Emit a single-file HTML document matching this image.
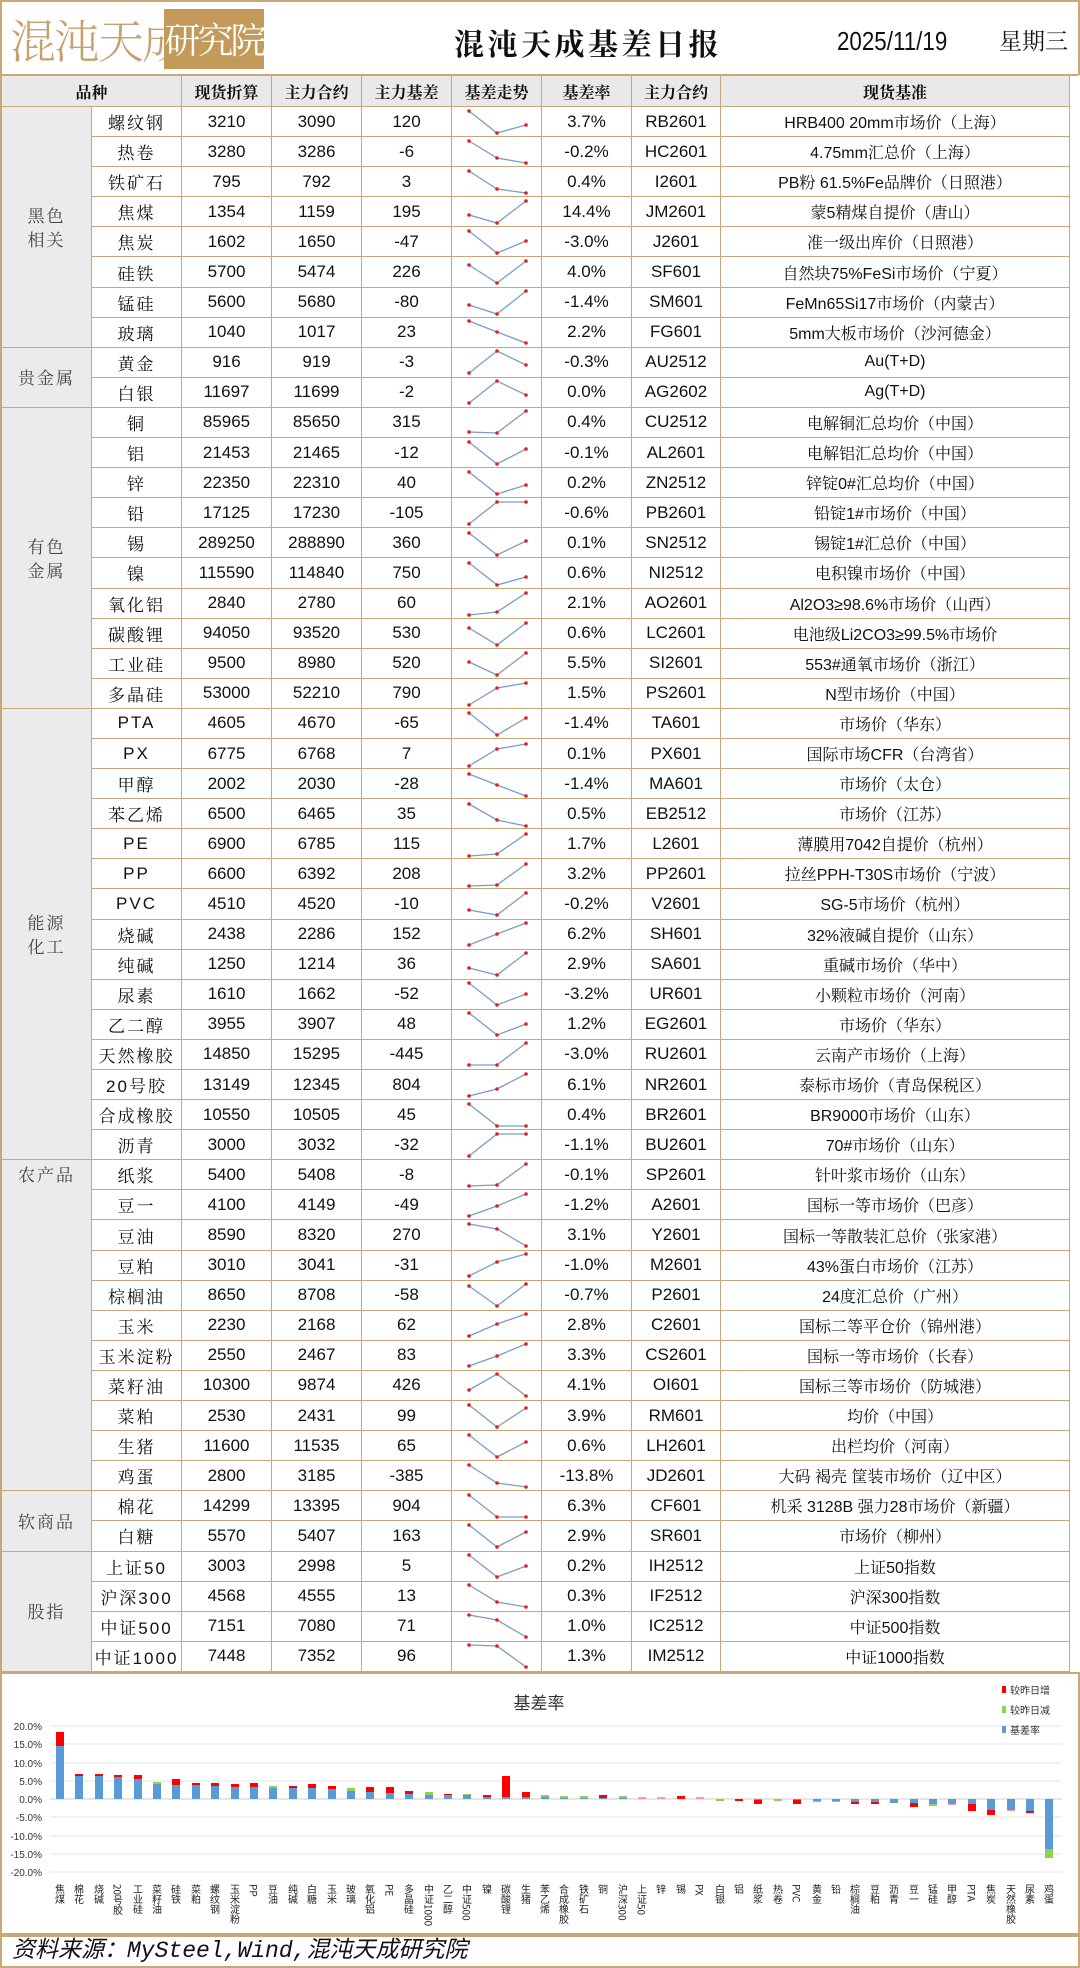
<!DOCTYPE html>
<html><head><meta charset="utf-8">
<style>
*{box-sizing:border-box;margin:0;padding:0}
body{width:1080px;height:1968px;background:#fff;position:relative;overflow:hidden;font-family:"Liberation Sans","Noto Serif CJK SC",serif;color:#111}
.hdr{position:absolute;left:0;top:0;width:1080px;height:75px;border:2px solid #c8a878;border-bottom:none}
.logo1{position:absolute;left:8px;top:4px;font-family:"Noto Serif CJK SC",serif;font-size:46px;color:#c8a070;font-weight:300;letter-spacing:-2px;line-height:66px}
.logo2{position:absolute;left:162px;top:7px;width:100px;height:60px;background:#c49a5a;color:#fff;font-family:"Noto Serif CJK SC",serif;font-size:36px;line-height:60px;text-align:center;letter-spacing:-3px}
.title{position:absolute;left:452px;top:18px;font-family:"Noto Serif CJK SC",serif;font-weight:bold;font-size:30px;letter-spacing:3.5px;line-height:44px}
.date{position:absolute;left:835px;top:22px;font-size:26px;line-height:34px;transform:scaleX(.86);transform-origin:left;font-family:"Liberation Sans",sans-serif}
.week{position:absolute;left:997px;top:21px;font-size:23px;line-height:34px;font-family:"Noto Serif CJK SC",serif}
.grid{position:absolute;left:0;top:74px;width:1078px;display:grid;grid-template-columns:90px 90px 90px 90px 90px 90px 90px 89px 349px;grid-template-rows:31px repeat(52,30.1px);border-left:2px solid #c8a878;border-top:2px solid #c8a878}
.grid>div{border-right:1.5px solid #c8a878;border-bottom:1.5px solid #c8a878;display:flex;align-items:center;justify-content:center;font-size:17px;font-family:"Liberation Sans","Noto Serif CJK SC",sans-serif;white-space:nowrap;overflow:hidden}
.grid>div.h{background:#e9e9e9;font-family:"Noto Serif CJK SC",serif;font-weight:bold;font-size:16px}
.grid>div.h2{grid-column:span 2}
.grid>div.g{background:#ebebeb;font-family:"Noto Serif CJK SC",serif;font-size:17px;color:#444;text-align:center;line-height:24px;letter-spacing:2px}
.grid>div.n{font-family:"Liberation Sans","Noto Serif CJK SC",serif;letter-spacing:2px}
.grid>div.b{font-size:16px}
.grid>div.s{padding:0}
.s polyline{fill:none;stroke:#7a9cc6;stroke-width:1.3}
.s circle{r:1.8px;fill:#e02020}
.chart{position:absolute;left:0;top:1672px;width:1080px;height:263px;border:2px solid #c8a878}
.foot{position:absolute;left:0;top:1935px;width:1080px;height:33px;border:2px solid #c8a878;font-style:italic;font-size:23px;padding-left:10px;line-height:29px;font-family:"Liberation Mono","Noto Sans CJK SC",monospace}
</style></head><body>
<div class="hdr">
<div class="logo1">混沌天成</div>
<div class="logo2">研究院</div>
<div class="title">混沌天成基差日报</div>
<div class="date">2025/11/19</div>
<div class="week">星期三</div>
</div>
<div class="grid">
<div class="h h2">品种</div><div class="h">现货折算</div><div class="h">主力合约</div><div class="h">主力基差</div><div class="h">基差走势</div><div class="h">基差率</div><div class="h">主力合约</div><div class="h">现货基准</div>

<div class="g" style="grid-row:span 8">黑色<br>相关</div>
<div class="n">螺纹钢</div><div>3210</div><div>3090</div><div>120</div><div class="s"><svg width="90" height="30"><polyline points="17,4 45,26 74,18"/><circle cx="17" cy="4"/><circle cx="45" cy="26"/><circle cx="74" cy="18"/></svg></div><div>3.7%</div><div>RB2601</div><div class="b">HRB400 20mm市场价（上海）</div>
<div class="n">热卷</div><div>3280</div><div>3286</div><div>-6</div><div class="s"><svg width="90" height="30"><polyline points="17,4 45,21 74,26"/><circle cx="17" cy="4"/><circle cx="45" cy="21"/><circle cx="74" cy="26"/></svg></div><div>-0.2%</div><div>HC2601</div><div class="b">4.75mm汇总价（上海）</div>
<div class="n">铁矿石</div><div>795</div><div>792</div><div>3</div><div class="s"><svg width="90" height="30"><polyline points="17,4 45,22 74,26"/><circle cx="17" cy="4"/><circle cx="45" cy="22"/><circle cx="74" cy="26"/></svg></div><div>0.4%</div><div>I2601</div><div class="b">PB粉 61.5%Fe品牌价（日照港）</div>
<div class="n">焦煤</div><div>1354</div><div>1159</div><div>195</div><div class="s"><svg width="90" height="30"><polyline points="17,18 45,26 74,4"/><circle cx="17" cy="18"/><circle cx="45" cy="26"/><circle cx="74" cy="4"/></svg></div><div>14.4%</div><div>JM2601</div><div class="b">蒙5精煤自提价（唐山）</div>
<div class="n">焦炭</div><div>1602</div><div>1650</div><div>-47</div><div class="s"><svg width="90" height="30"><polyline points="17,4 45,26 74,14"/><circle cx="17" cy="4"/><circle cx="45" cy="26"/><circle cx="74" cy="14"/></svg></div><div>-3.0%</div><div>J2601</div><div class="b">准一级出库价（日照港）</div>
<div class="n">硅铁</div><div>5700</div><div>5474</div><div>226</div><div class="s"><svg width="90" height="30"><polyline points="17,8 45,26 74,4"/><circle cx="17" cy="8"/><circle cx="45" cy="26"/><circle cx="74" cy="4"/></svg></div><div>4.0%</div><div>SF601</div><div class="b">自然块75%FeSi市场价（宁夏）</div>
<div class="n">锰硅</div><div>5600</div><div>5680</div><div>-80</div><div class="s"><svg width="90" height="30"><polyline points="17,18 45,27 74,4"/><circle cx="17" cy="18"/><circle cx="45" cy="27"/><circle cx="74" cy="4"/></svg></div><div>-1.4%</div><div>SM601</div><div class="b">FeMn65Si17市场价（内蒙古）</div>
<div class="n">玻璃</div><div>1040</div><div>1017</div><div>23</div><div class="s"><svg width="90" height="30"><polyline points="17,4 45,15 74,26"/><circle cx="17" cy="4"/><circle cx="45" cy="15"/><circle cx="74" cy="26"/></svg></div><div>2.2%</div><div>FG601</div><div class="b">5mm大板市场价（沙河德金）</div>

<div class="g" style="grid-row:span 2">贵金属</div>
<div class="n">黄金</div><div>916</div><div>919</div><div>-3</div><div class="s"><svg width="90" height="30"><polyline points="17,26 45,4 74,18"/><circle cx="17" cy="26"/><circle cx="45" cy="4"/><circle cx="74" cy="18"/></svg></div><div>-0.3%</div><div>AU2512</div><div class="b">Au(T+D)</div>
<div class="n">白银</div><div>11697</div><div>11699</div><div>-2</div><div class="s"><svg width="90" height="30"><polyline points="17,26 45,4 74,18"/><circle cx="17" cy="26"/><circle cx="45" cy="4"/><circle cx="74" cy="18"/></svg></div><div>0.0%</div><div>AG2602</div><div class="b">Ag(T+D)</div>

<div class="g" style="grid-row:span 10">有色<br>金属</div>
<div class="n">铜</div><div>85965</div><div>85650</div><div>315</div><div class="s"><svg width="90" height="30"><polyline points="17,25 45,26 74,4"/><circle cx="17" cy="25"/><circle cx="45" cy="26"/><circle cx="74" cy="4"/></svg></div><div>0.4%</div><div>CU2512</div><div class="b">电解铜汇总均价（中国）</div>
<div class="n">铝</div><div>21453</div><div>21465</div><div>-12</div><div class="s"><svg width="90" height="30"><polyline points="17,4 45,26 74,11"/><circle cx="17" cy="4"/><circle cx="45" cy="26"/><circle cx="74" cy="11"/></svg></div><div>-0.1%</div><div>AL2601</div><div class="b">电解铝汇总均价（中国）</div>
<div class="n">锌</div><div>22350</div><div>22310</div><div>40</div><div class="s"><svg width="90" height="30"><polyline points="17,4 45,26 74,17"/><circle cx="17" cy="4"/><circle cx="45" cy="26"/><circle cx="74" cy="17"/></svg></div><div>0.2%</div><div>ZN2512</div><div class="b">锌锭0#汇总均价（中国）</div>
<div class="n">铅</div><div>17125</div><div>17230</div><div>-105</div><div class="s"><svg width="90" height="30"><polyline points="17,26 45,4 74,4"/><circle cx="17" cy="26"/><circle cx="45" cy="4"/><circle cx="74" cy="4"/></svg></div><div>-0.6%</div><div>PB2601</div><div class="b">铅锭1#市场价（中国）</div>
<div class="n">锡</div><div>289250</div><div>288890</div><div>360</div><div class="s"><svg width="90" height="30"><polyline points="17,5 45,27 74,13"/><circle cx="17" cy="5"/><circle cx="45" cy="27"/><circle cx="74" cy="13"/></svg></div><div>0.1%</div><div>SN2512</div><div class="b">锡锭1#汇总价（中国）</div>
<div class="n">镍</div><div>115590</div><div>114840</div><div>750</div><div class="s"><svg width="90" height="30"><polyline points="17,5 45,27 74,19"/><circle cx="17" cy="5"/><circle cx="45" cy="27"/><circle cx="74" cy="19"/></svg></div><div>0.6%</div><div>NI2512</div><div class="b">电积镍市场价（中国）</div>
<div class="n">氧化铝</div><div>2840</div><div>2780</div><div>60</div><div class="s"><svg width="90" height="30"><polyline points="17,27 45,24 74,5"/><circle cx="17" cy="27"/><circle cx="45" cy="24"/><circle cx="74" cy="5"/></svg></div><div>2.1%</div><div>AO2601</div><div class="b">Al2O3≥98.6%市场价（山西）</div>
<div class="n">碳酸锂</div><div>94050</div><div>93520</div><div>530</div><div class="s"><svg width="90" height="30"><polyline points="17,10 45,27 74,5"/><circle cx="17" cy="10"/><circle cx="45" cy="27"/><circle cx="74" cy="5"/></svg></div><div>0.6%</div><div>LC2601</div><div class="b">电池级Li2CO3≥99.5%市场价</div>
<div class="n">工业硅</div><div>9500</div><div>8980</div><div>520</div><div class="s"><svg width="90" height="30"><polyline points="17,14 45,27 74,5"/><circle cx="17" cy="14"/><circle cx="45" cy="27"/><circle cx="74" cy="5"/></svg></div><div>5.5%</div><div>SI2601</div><div class="b">553#通氧市场价（浙江）</div>
<div class="n">多晶硅</div><div>53000</div><div>52210</div><div>790</div><div class="s"><svg width="90" height="30"><polyline points="17,27 45,10 74,5"/><circle cx="17" cy="27"/><circle cx="45" cy="10"/><circle cx="74" cy="5"/></svg></div><div>1.5%</div><div>PS2601</div><div class="b">N型市场价（中国）</div>

<div class="g" style="grid-row:span 15">能源<br>化工</div>
<div class="n">PTA</div><div>4605</div><div>4670</div><div>-65</div><div class="s"><svg width="90" height="30"><polyline points="17,5 45,27 74,10"/><circle cx="17" cy="5"/><circle cx="45" cy="27"/><circle cx="74" cy="10"/></svg></div><div>-1.4%</div><div>TA601</div><div class="b">市场价（华东）</div>
<div class="n">PX</div><div>6775</div><div>6768</div><div>7</div><div class="s"><svg width="90" height="30"><polyline points="17,27 45,10 74,5"/><circle cx="17" cy="27"/><circle cx="45" cy="10"/><circle cx="74" cy="5"/></svg></div><div>0.1%</div><div>PX601</div><div class="b">国际市场CFR（台湾省）</div>
<div class="n">甲醇</div><div>2002</div><div>2030</div><div>-28</div><div class="s"><svg width="90" height="30"><polyline points="17,5 45,16 74,27"/><circle cx="17" cy="5"/><circle cx="45" cy="16"/><circle cx="74" cy="27"/></svg></div><div>-1.4%</div><div>MA601</div><div class="b">市场价（太仓）</div>
<div class="n">苯乙烯</div><div>6500</div><div>6465</div><div>35</div><div class="s"><svg width="90" height="30"><polyline points="17,5 45,21 74,27"/><circle cx="17" cy="5"/><circle cx="45" cy="21"/><circle cx="74" cy="27"/></svg></div><div>0.5%</div><div>EB2512</div><div class="b">市场价（江苏）</div>
<div class="n">PE</div><div>6900</div><div>6785</div><div>115</div><div class="s"><svg width="90" height="30"><polyline points="17,27 45,25 74,5"/><circle cx="17" cy="27"/><circle cx="45" cy="25"/><circle cx="74" cy="5"/></svg></div><div>1.7%</div><div>L2601</div><div class="b">薄膜用7042自提价（杭州）</div>
<div class="n">PP</div><div>6600</div><div>6392</div><div>208</div><div class="s"><svg width="90" height="30"><polyline points="17,27 45,26 74,5"/><circle cx="17" cy="27"/><circle cx="45" cy="26"/><circle cx="74" cy="5"/></svg></div><div>3.2%</div><div>PP2601</div><div class="b">拉丝PPH-T30S市场价（宁波）</div>
<div class="n">PVC</div><div>4510</div><div>4520</div><div>-10</div><div class="s"><svg width="90" height="30"><polyline points="17,21 45,26 74,4"/><circle cx="17" cy="21"/><circle cx="45" cy="26"/><circle cx="74" cy="4"/></svg></div><div>-0.2%</div><div>V2601</div><div class="b">SG-5市场价（杭州）</div>
<div class="n">烧碱</div><div>2438</div><div>2286</div><div>152</div><div class="s"><svg width="90" height="30"><polyline points="17,26 45,15 74,4"/><circle cx="17" cy="26"/><circle cx="45" cy="15"/><circle cx="74" cy="4"/></svg></div><div>6.2%</div><div>SH601</div><div class="b">32%液碱自提价（山东）</div>
<div class="n">纯碱</div><div>1250</div><div>1214</div><div>36</div><div class="s"><svg width="90" height="30"><polyline points="17,19 45,26 74,4"/><circle cx="17" cy="19"/><circle cx="45" cy="26"/><circle cx="74" cy="4"/></svg></div><div>2.9%</div><div>SA601</div><div class="b">重碱市场价（华中）</div>
<div class="n">尿素</div><div>1610</div><div>1662</div><div>-52</div><div class="s"><svg width="90" height="30"><polyline points="17,4 45,26 74,15"/><circle cx="17" cy="4"/><circle cx="45" cy="26"/><circle cx="74" cy="15"/></svg></div><div>-3.2%</div><div>UR601</div><div class="b">小颗粒市场价（河南）</div>
<div class="n">乙二醇</div><div>3955</div><div>3907</div><div>48</div><div class="s"><svg width="90" height="30"><polyline points="17,4 45,26 74,15"/><circle cx="17" cy="4"/><circle cx="45" cy="26"/><circle cx="74" cy="15"/></svg></div><div>1.2%</div><div>EG2601</div><div class="b">市场价（华东）</div>
<div class="n">天然橡胶</div><div>14850</div><div>15295</div><div>-445</div><div class="s"><svg width="90" height="30"><polyline points="17,26 45,26 74,4"/><circle cx="17" cy="26"/><circle cx="45" cy="26"/><circle cx="74" cy="4"/></svg></div><div>-3.0%</div><div>RU2601</div><div class="b">云南产市场价（上海）</div>
<div class="n">20号胶</div><div>13149</div><div>12345</div><div>804</div><div class="s"><svg width="90" height="30"><polyline points="17,26 45,19 74,4"/><circle cx="17" cy="26"/><circle cx="45" cy="19"/><circle cx="74" cy="4"/></svg></div><div>6.1%</div><div>NR2601</div><div class="b">泰标市场价（青岛保税区）</div>
<div class="n">合成橡胶</div><div>10550</div><div>10505</div><div>45</div><div class="s"><svg width="90" height="30"><polyline points="17,4 45,26 74,26"/><circle cx="17" cy="4"/><circle cx="45" cy="26"/><circle cx="74" cy="26"/></svg></div><div>0.4%</div><div>BR2601</div><div class="b">BR9000市场价（山东）</div>
<div class="n">沥青</div><div>3000</div><div>3032</div><div>-32</div><div class="s"><svg width="90" height="30"><polyline points="17,26 45,4 74,4"/><circle cx="17" cy="26"/><circle cx="45" cy="4"/><circle cx="74" cy="4"/></svg></div><div>-1.1%</div><div>BU2601</div><div class="b">70#市场价（山东）</div>

<div class="g" style="grid-row:span 11;align-items:flex-start;padding-top:2px">农产品</div>
<div class="n">纸浆</div><div>5400</div><div>5408</div><div>-8</div><div class="s"><svg width="90" height="30"><polyline points="17,26 45,25 74,4"/><circle cx="17" cy="26"/><circle cx="45" cy="25"/><circle cx="74" cy="4"/></svg></div><div>-0.1%</div><div>SP2601</div><div class="b">针叶浆市场价（山东）</div>
<div class="n">豆一</div><div>4100</div><div>4149</div><div>-49</div><div class="s"><svg width="90" height="30"><polyline points="17,26 45,16 74,4"/><circle cx="17" cy="26"/><circle cx="45" cy="16"/><circle cx="74" cy="4"/></svg></div><div>-1.2%</div><div>A2601</div><div class="b">国标一等市场价（巴彦）</div>
<div class="n">豆油</div><div>8590</div><div>8320</div><div>270</div><div class="s"><svg width="90" height="30"><polyline points="17,4 45,9 74,26"/><circle cx="17" cy="4"/><circle cx="45" cy="9"/><circle cx="74" cy="26"/></svg></div><div>3.1%</div><div>Y2601</div><div class="b">国标一等散装汇总价（张家港）</div>
<div class="n">豆粕</div><div>3010</div><div>3041</div><div>-31</div><div class="s"><svg width="90" height="30"><polyline points="17,26 45,12 74,4"/><circle cx="17" cy="26"/><circle cx="45" cy="12"/><circle cx="74" cy="4"/></svg></div><div>-1.0%</div><div>M2601</div><div class="b">43%蛋白市场价（江苏）</div>
<div class="n">棕榈油</div><div>8650</div><div>8708</div><div>-58</div><div class="s"><svg width="90" height="30"><polyline points="17,6 45,26 74,4"/><circle cx="17" cy="6"/><circle cx="45" cy="26"/><circle cx="74" cy="4"/></svg></div><div>-0.7%</div><div>P2601</div><div class="b">24度汇总价（广州）</div>
<div class="n">玉米</div><div>2230</div><div>2168</div><div>62</div><div class="s"><svg width="90" height="30"><polyline points="17,26 45,14 74,4"/><circle cx="17" cy="26"/><circle cx="45" cy="14"/><circle cx="74" cy="4"/></svg></div><div>2.8%</div><div>C2601</div><div class="b">国标二等平仓价（锦州港）</div>
<div class="n">玉米淀粉</div><div>2550</div><div>2467</div><div>83</div><div class="s"><svg width="90" height="30"><polyline points="17,26 45,16 74,4"/><circle cx="17" cy="26"/><circle cx="45" cy="16"/><circle cx="74" cy="4"/></svg></div><div>3.3%</div><div>CS2601</div><div class="b">国标一等市场价（长春）</div>
<div class="n">菜籽油</div><div>10300</div><div>9874</div><div>426</div><div class="s"><svg width="90" height="30"><polyline points="17,20 45,4 74,26"/><circle cx="17" cy="20"/><circle cx="45" cy="4"/><circle cx="74" cy="26"/></svg></div><div>4.1%</div><div>OI601</div><div class="b">国标三等市场价（防城港）</div>
<div class="n">菜粕</div><div>2530</div><div>2431</div><div>99</div><div class="s"><svg width="90" height="30"><polyline points="17,4 45,26 74,7"/><circle cx="17" cy="4"/><circle cx="45" cy="26"/><circle cx="74" cy="7"/></svg></div><div>3.9%</div><div>RM601</div><div class="b">均价（中国）</div>
<div class="n">生猪</div><div>11600</div><div>11535</div><div>65</div><div class="s"><svg width="90" height="30"><polyline points="17,4 45,26 74,11"/><circle cx="17" cy="4"/><circle cx="45" cy="26"/><circle cx="74" cy="11"/></svg></div><div>0.6%</div><div>LH2601</div><div class="b">出栏均价（河南）</div>
<div class="n">鸡蛋</div><div>2800</div><div>3185</div><div>-385</div><div class="s"><svg width="90" height="30"><polyline points="17,4 45,22 74,26"/><circle cx="17" cy="4"/><circle cx="45" cy="22"/><circle cx="74" cy="26"/></svg></div><div>-13.8%</div><div>JD2601</div><div class="b">大码 褐壳 筐装市场价（辽中区）</div>

<div class="g" style="grid-row:span 2">软商品</div>
<div class="n">棉花</div><div>14299</div><div>13395</div><div>904</div><div class="s"><svg width="90" height="30"><polyline points="17,4 45,26 74,26"/><circle cx="17" cy="4"/><circle cx="45" cy="26"/><circle cx="74" cy="26"/></svg></div><div>6.3%</div><div>CF601</div><div class="b">机采 3128B 强力28市场价（新疆）</div>
<div class="n">白糖</div><div>5570</div><div>5407</div><div>163</div><div class="s"><svg width="90" height="30"><polyline points="17,4 45,26 74,11"/><circle cx="17" cy="4"/><circle cx="45" cy="26"/><circle cx="74" cy="11"/></svg></div><div>2.9%</div><div>SR601</div><div class="b">市场价（柳州）</div>

<div class="g" style="grid-row:span 4">股指</div>
<div class="n">上证50</div><div>3003</div><div>2998</div><div>5</div><div class="s"><svg width="90" height="30"><polyline points="17,4 45,26 74,15"/><circle cx="17" cy="4"/><circle cx="45" cy="26"/><circle cx="74" cy="15"/></svg></div><div>0.2%</div><div>IH2512</div><div class="b">上证50指数</div>
<div class="n">沪深300</div><div>4568</div><div>4555</div><div>13</div><div class="s"><svg width="90" height="30"><polyline points="17,4 45,21 74,26"/><circle cx="17" cy="4"/><circle cx="45" cy="21"/><circle cx="74" cy="26"/></svg></div><div>0.3%</div><div>IF2512</div><div class="b">沪深300指数</div>
<div class="n">中证500</div><div>7151</div><div>7080</div><div>71</div><div class="s"><svg width="90" height="30"><polyline points="17,4 45,9 74,26"/><circle cx="17" cy="4"/><circle cx="45" cy="9"/><circle cx="74" cy="26"/></svg></div><div>1.0%</div><div>IC2512</div><div class="b">中证500指数</div>
<div class="n">中证1000</div><div>7448</div><div>7352</div><div>96</div><div class="s"><svg width="90" height="30"><polyline points="17,4 45,5 74,26"/><circle cx="17" cy="4"/><circle cx="45" cy="5"/><circle cx="74" cy="26"/></svg></div><div>1.3%</div><div>IM2512</div><div class="b">中证1000指数</div>
</div>

<div class="chart">
<svg width="1076" height="259" style="position:absolute;left:0;top:0" font-family="Liberation Sans, Noto Sans CJK SC, sans-serif">
<text x="537" y="35" font-size="17" text-anchor="middle" font-family="Noto Sans CJK SC, sans-serif" fill="#333">基差率</text>
<g stroke="#e4e4e4" stroke-width="1">
<line x1="48" y1="52" x2="1060" y2="52"/><line x1="48" y1="70" x2="1060" y2="70"/><line x1="48" y1="89" x2="1060" y2="89"/><line x1="48" y1="107" x2="1060" y2="107"/><line x1="48" y1="143" x2="1060" y2="143"/><line x1="48" y1="162" x2="1060" y2="162"/><line x1="48" y1="180" x2="1060" y2="180"/><line x1="48" y1="198" x2="1060" y2="198"/>
</g>
<line x1="48" y1="125" x2="1060" y2="125" stroke="#ccc"/>
<g font-size="10" fill="#333" text-anchor="end">
<text x="40" y="56">20.0%</text><text x="40" y="74">15.0%</text><text x="40" y="93">10.0%</text><text x="40" y="111">5.0%</text><text x="40" y="129">0.0%</text><text x="40" y="147">-5.0%</text><text x="40" y="166">-10.0%</text><text x="40" y="184">-15.0%</text><text x="40" y="202">-20.0%</text>
</g>
<g>
<rect x="54" y="72" width="8" height="53" fill="#5b9bd5"/><rect x="54" y="58" width="8" height="14" fill="#f00"/>
<rect x="73" y="102" width="8" height="23" fill="#5b9bd5"/><rect x="73" y="100" width="8" height="2" fill="#f00"/>
<rect x="93" y="102" width="8" height="23" fill="#5b9bd5"/><rect x="93" y="100" width="8" height="2" fill="#f00"/>
<rect x="112" y="103" width="8" height="22" fill="#5b9bd5"/><rect x="112" y="101" width="8" height="2" fill="#f00"/>
<rect x="132" y="105" width="8" height="20" fill="#5b9bd5"/><rect x="132" y="101" width="8" height="4" fill="#f00"/>
<rect x="151" y="110" width="8" height="15" fill="#5b9bd5"/><rect x="151" y="108" width="8" height="2" fill="#92d050"/>
<rect x="170" y="111" width="8" height="14" fill="#5b9bd5"/><rect x="170" y="105" width="8" height="6" fill="#f00"/>
<rect x="190" y="111" width="8" height="14" fill="#5b9bd5"/><rect x="190" y="109" width="8" height="2" fill="#f00"/>
<rect x="209" y="112" width="8" height="13" fill="#5b9bd5"/><rect x="209" y="109" width="8" height="3" fill="#f00"/>
<rect x="229" y="113" width="8" height="12" fill="#5b9bd5"/><rect x="229" y="110" width="8" height="3" fill="#f00"/>
<rect x="248" y="113" width="8" height="12" fill="#5b9bd5"/><rect x="248" y="109" width="8" height="4" fill="#f00"/>
<rect x="267" y="114" width="8" height="11" fill="#5b9bd5"/><rect x="267" y="112" width="8" height="2" fill="#92d050"/>
<rect x="287" y="114" width="8" height="11" fill="#5b9bd5"/><rect x="287" y="112" width="8" height="2" fill="#f00"/>
<rect x="306" y="114" width="8" height="11" fill="#5b9bd5"/><rect x="306" y="110" width="8" height="4" fill="#f00"/>
<rect x="326" y="115" width="8" height="10" fill="#5b9bd5"/><rect x="326" y="112" width="8" height="3" fill="#f00"/>
<rect x="345" y="117" width="8" height="8" fill="#5b9bd5"/><rect x="345" y="114" width="8" height="3" fill="#92d050"/>
<rect x="364" y="118" width="8" height="7" fill="#5b9bd5"/><rect x="364" y="113" width="8" height="5" fill="#f00"/>
<rect x="384" y="119" width="8" height="6" fill="#5b9bd5"/><rect x="384" y="113" width="8" height="6" fill="#f00"/>
<rect x="403" y="120" width="8" height="5" fill="#5b9bd5"/><rect x="403" y="117" width="8" height="3" fill="#f00"/>
<rect x="423" y="121" width="8" height="4" fill="#5b9bd5"/><rect x="423" y="118" width="8" height="3" fill="#92d050"/>
<rect x="442" y="121" width="8" height="4" fill="#5b9bd5"/><rect x="442" y="120" width="8" height="1" fill="#f00"/>
<rect x="461" y="121" width="8" height="4" fill="#5b9bd5"/><rect x="461" y="120" width="8" height="1" fill="#92d050"/>
<rect x="481" y="123" width="8" height="2" fill="#5b9bd5"/><rect x="481" y="121" width="8" height="2" fill="#f00"/>
<rect x="500" y="123" width="8" height="2" fill="#5b9bd5"/><rect x="500" y="102" width="8" height="21" fill="#f00"/>
<rect x="520" y="123" width="8" height="2" fill="#5b9bd5"/><rect x="520" y="118" width="8" height="5" fill="#f00"/>
<rect x="539" y="123" width="8" height="2" fill="#5b9bd5"/><rect x="539" y="121" width="8" height="2" fill="#92d050"/>
<rect x="558" y="124" width="8" height="1" fill="#5b9bd5"/><rect x="558" y="122" width="8" height="2" fill="#92d050"/>
<rect x="578" y="124" width="8" height="1" fill="#5b9bd5"/><rect x="578" y="122" width="8" height="2" fill="#92d050"/>
<rect x="597" y="124" width="8" height="1" fill="#5b9bd5"/><rect x="597" y="121" width="8" height="3" fill="#f00"/>
<rect x="617" y="124" width="8" height="1" fill="#5b9bd5"/><rect x="617" y="122" width="8" height="2" fill="#92d050"/>
<rect x="636" y="123" width="8" height="2" fill="#ff9a9a"/>
<rect x="655" y="123" width="8" height="2" fill="#ff9a9a"/>
<rect x="675" y="122" width="8" height="3" fill="#f00"/>
<rect x="694" y="123" width="8" height="2" fill="#ff9a9a"/>
<rect x="714" y="125" width="8" height="2" fill="#92d050"/>
<rect x="733" y="125" width="8" height="2" fill="#f00"/>
<rect x="752" y="125" width="8" height="1" fill="#5b9bd5"/><rect x="752" y="126" width="8" height="4" fill="#f00"/>
<rect x="772" y="125" width="8" height="2" fill="#92d050"/>
<rect x="791" y="125" width="8" height="1" fill="#5b9bd5"/><rect x="791" y="126" width="8" height="4" fill="#f00"/>
<rect x="811" y="125" width="8" height="2" fill="#5b9bd5"/><rect x="811" y="127" width="8" height="1" fill="#92d050"/>
<rect x="830" y="125" width="8" height="2" fill="#5b9bd5"/><rect x="830" y="127" width="8" height="1" fill="#92d050"/>
<rect x="849" y="125" width="8" height="3" fill="#5b9bd5"/><rect x="849" y="128" width="8" height="2" fill="#f00"/>
<rect x="869" y="125" width="8" height="3" fill="#5b9bd5"/><rect x="869" y="128" width="8" height="2" fill="#f00"/>
<rect x="888" y="125" width="8" height="4" fill="#5b9bd5"/>
<rect x="908" y="125" width="8" height="4" fill="#5b9bd5"/><rect x="908" y="129" width="8" height="4" fill="#f00"/>
<rect x="927" y="125" width="8" height="5" fill="#5b9bd5"/><rect x="927" y="130" width="8" height="2" fill="#92d050"/>
<rect x="946" y="125" width="8" height="5" fill="#5b9bd5"/><rect x="946" y="130" width="8" height="1" fill="#ff9a9a"/>
<rect x="966" y="125" width="8" height="5" fill="#5b9bd5"/><rect x="966" y="130" width="8" height="7" fill="#f00"/>
<rect x="985" y="125" width="8" height="11" fill="#5b9bd5"/><rect x="985" y="136" width="8" height="5" fill="#f00"/>
<rect x="1005" y="125" width="8" height="11" fill="#5b9bd5"/><rect x="1005" y="136" width="8" height="1" fill="#ff9a9a"/>
<rect x="1024" y="125" width="8" height="12" fill="#5b9bd5"/><rect x="1024" y="137" width="8" height="2" fill="#f00"/>
<rect x="1043" y="125" width="8" height="50" fill="#5b9bd5"/><rect x="1043" y="175" width="8" height="9" fill="#92d050"/>
</g>
<g font-size="10" fill="#222" font-family="Noto Sans CJK SC, sans-serif" style="writing-mode:vertical-rl">
<text x="58" y="210">焦煤</text><text x="77" y="210">棉花</text><text x="97" y="210">烧碱</text><text x="116" y="210">20号胶</text><text x="136" y="210">工业硅</text><text x="155" y="210">菜籽油</text><text x="174" y="210">硅铁</text><text x="194" y="210">菜粕</text><text x="213" y="210">螺纹钢</text><text x="233" y="210">玉米淀粉</text><text x="252" y="210">PP</text><text x="271" y="210">豆油</text><text x="291" y="210">纯碱</text><text x="310" y="210">白糖</text><text x="330" y="210">玉米</text><text x="349" y="210">玻璃</text><text x="368" y="210">氧化铝</text><text x="388" y="210">PE</text><text x="407" y="210">多晶硅</text><text x="427" y="210">中证1000</text><text x="446" y="210">乙二醇</text><text x="465" y="210">中证500</text><text x="485" y="210">镍</text><text x="504" y="210">碳酸锂</text><text x="524" y="210">生猪</text><text x="543" y="210">苯乙烯</text><text x="562" y="210">合成橡胶</text><text x="582" y="210">铁矿石</text><text x="601" y="210">铜</text><text x="621" y="210">沪深300</text><text x="640" y="210">上证50</text><text x="659" y="210">锌</text><text x="679" y="210">锡</text><text x="698" y="210">PX</text><text x="718" y="210">白银</text><text x="737" y="210">铝</text><text x="756" y="210">纸浆</text><text x="776" y="210">热卷</text><text x="795" y="210">PVC</text><text x="815" y="210">黄金</text><text x="834" y="210">铅</text><text x="853" y="210">棕榈油</text><text x="873" y="210">豆粕</text><text x="892" y="210">沥青</text><text x="912" y="210">豆一</text><text x="931" y="210">锰硅</text><text x="950" y="210">甲醇</text><text x="970" y="210">PTA</text><text x="989" y="210">焦炭</text><text x="1009" y="210">天然橡胶</text><text x="1028" y="210">尿素</text><text x="1047" y="210">鸡蛋</text>
</g>
<g font-size="10" fill="#333" font-family="Noto Sans CJK SC, sans-serif">
<rect x="1000" y="12" width="4" height="7" fill="#f00"/><text x="1008" y="20">较昨日增</text>
<rect x="1000" y="32" width="4" height="7" fill="#92d050"/><text x="1008" y="40">较昨日减</text>
<rect x="1000" y="52" width="4" height="7" fill="#5b9bd5"/><text x="1008" y="60">基差率</text>
</g>
</svg>
</div>
<div class="foot">资料来源：MySteel,Wind,混沌天成研究院</div>
</body></html>
